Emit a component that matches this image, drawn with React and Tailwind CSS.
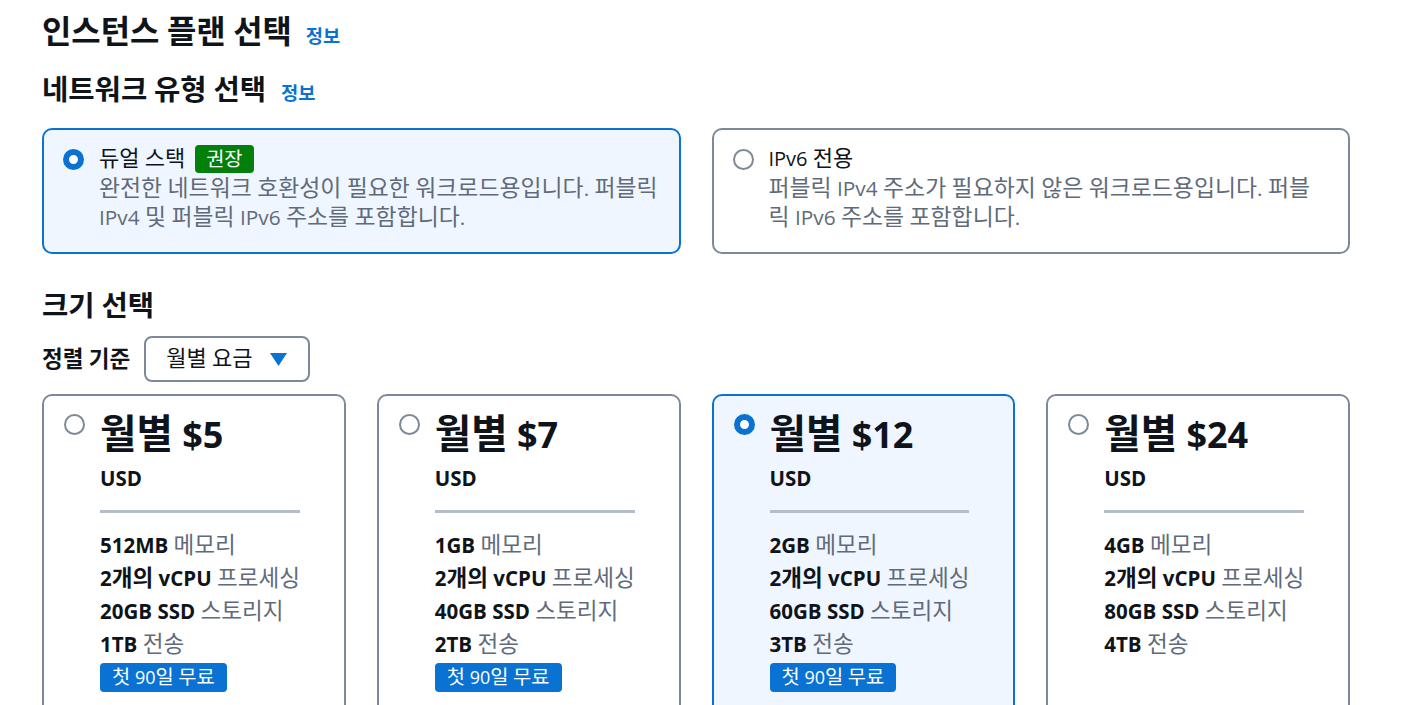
import React from 'react';

const FONT = { fontFamily: '"Open Sans", "Noto Sans CJK KR", sans-serif' };

// Hangul runs are set a touch larger so their width matches the reference
const K = ({ children }) => {
  const parts = String(children).split(/([\uac00-\ud7a3]+)/);
  return parts.map((p, i) =>
    /[\uac00-\ud7a3]/.test(p) ? (
      <span key={i} className="text-[1.1em] leading-none">
        {p}
      </span>
    ) : (
      <React.Fragment key={i}>{p}</React.Fragment>
    )
  );
};

const Radio = ({ checked }) =>
  checked ? (
    <span className="block w-[21px] h-[21px] rounded-full border-[6px] border-[#0972d3] bg-white shrink-0" />
  ) : (
    <span className="block w-[21px] h-[21px] rounded-full border-2 border-[#7d8998] bg-white shrink-0" />
  );

const InfoLink = () => (
  <a className="text-[#0972d3] font-bold text-[17px]">
    <K>정보</K>
  </a>
);

const networkOptions = [
  {
    title: '듀얼 스택',
    badge: '권장',
    desc: '완전한 네트워크 호환성이 필요한 워크로드용입니다. 퍼블릭 IPv4 및 퍼블릭 IPv6 주소를 포함합니다.',
    checked: true,
  },
  {
    title: 'IPv6 전용',
    desc: '퍼블릭 IPv4 주소가 필요하지 않은 워크로드용입니다. 퍼블릭 IPv6 주소를 포함합니다.',
    checked: false,
  },
];

const plans = [
  { price: '$5', mem: '512MB', disk: '20GB SSD', transfer: '1TB', free: true },
  { price: '$7', mem: '1GB', disk: '40GB SSD', transfer: '2TB', free: true },
  { price: '$12', mem: '2GB', disk: '60GB SSD', transfer: '3TB', free: true, checked: true },
  { price: '$24', mem: '4GB', disk: '80GB SSD', transfer: '4TB', free: false },
];

const Spec = ({ strong, label }) => (
  <div className="whitespace-nowrap">
    <span className="font-bold">
      <K>{strong}</K>
    </span>{' '}
    <span className="text-[#5f6b7a]">
      <K>{label}</K>
    </span>
  </div>
);

export default function App() {
  return (
    <div className="min-h-screen bg-white text-[#0f141a] pl-[42px] pr-[54px] pt-[12px]" style={FONT}>
      {/* Instance plan */}
      <div className="flex items-baseline gap-[14px]">
        <h1 className="text-[29px] font-bold leading-[40px]">
          <K>인스턴스 플랜 선택</K>
        </h1>
        <InfoLink />
      </div>

      {/* Network type */}
      <div className="flex items-baseline gap-[15px] mt-[20px]">
        <h2 className="text-[26px] font-bold leading-[36px]">
          <K>네트워크 유형 선택</K>
        </h2>
        <InfoLink />
      </div>

      <div className="grid grid-cols-2 gap-[31px] mt-[20px]">
        {networkOptions.map((o) => (
          <div
            key={o.title}
            className={`h-[126px] rounded-[10px] border-2 pl-[19px] pr-[20px] pt-[14px] flex gap-[15px] ${
              o.checked ? 'border-[#0972d3] bg-[#f0f6ff]' : 'border-[#7d8998] bg-white'
            }`}
          >
            <div className="pt-[5px]">
              <Radio checked={o.checked} />
            </div>
            <div className="flex-1 min-w-0">
              <div className="flex items-center gap-[10px] h-[30px]">
                <span className="text-[20px] leading-[28px]">
                  <K>{o.title}</K>
                </span>
                {o.badge && (
                  <span className="bg-[#037f0c] text-white text-[18px] leading-[28px] px-[11px] rounded-[4px]">
                    <K>{o.badge}</K>
                  </span>
                )}
              </div>
              <p className="text-[20.8px] leading-[29px] text-[#5f6b7a]">
                <K>{o.desc}</K>
              </p>
            </div>
          </div>
        ))}
      </div>

      {/* Size */}
      <h2 className="text-[26px] font-bold leading-[36px] mt-[34px]">
        <K>크기 선택</K>
      </h2>

      <div className="flex items-center gap-[14px] mt-[12px]">
        <span className="text-[20.5px] font-bold">
          <K>정렬 기준</K>
        </span>
        <button className="h-[46px] w-[166px] rounded-[8px] border-2 border-[#7d8998] flex items-center justify-between pl-[20px] pr-[21px] text-[20px]">
          <span>
            <K>월별 요금</K>
          </span>
          <svg width="17" height="13" viewBox="0 0 17 13">
            <path d="M0 0 H17 L8.5 13 Z" fill="#0972d3" />
          </svg>
        </button>
      </div>

      <div className="grid grid-cols-4 gap-[31px] mt-[12px]">
        {plans.map((p) => (
          <div
            key={p.price}
            className={`h-[330px] rounded-[10px] border-2 pl-[20px] pr-[20px] pt-[18px] flex gap-[15px] ${
              p.checked ? 'border-[#0972d3] bg-[#f0f6ff]' : 'border-[#7d8998] bg-white'
            }`}
          >
            <div>
              <Radio checked={p.checked} />
            </div>
            <div className="flex-1 min-w-0">
              <div className="text-[36px] font-bold leading-[42px]">
                <K>월별</K> {p.price}
              </div>
              <div className="text-[20.5px] font-bold leading-[26px] mt-[9px]">USD</div>
              <div className="h-[3px] bg-[#b4bdc8] mt-[19px] mr-[24px]" />
              <div className="mt-[16px] text-[20.5px] leading-[33px]">
                <Spec strong={p.mem} label="메모리" />
                <Spec strong="2개의 vCPU" label="프로세싱" />
                <Spec strong={p.disk} label="스토리지" />
                <Spec strong={p.transfer} label="전송" />
              </div>
              {p.free && (
                <span className="inline-block mt-[2px] bg-[#0972d3] text-white text-[18px] leading-[29px] px-[12px] rounded-[4px]">
                  <K>첫 90일 무료</K>
                </span>
              )}
            </div>
          </div>
        ))}
      </div>
    </div>
  );
}
